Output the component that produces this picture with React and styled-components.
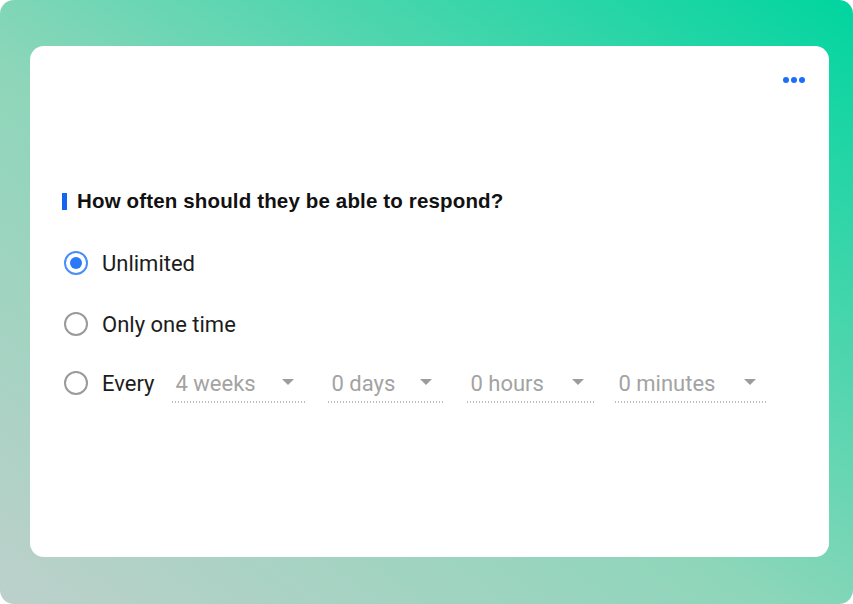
import styled, { createGlobalStyle } from "styled-components";

const Global = createGlobalStyle`
  html, body {
    margin: 0;
    padding: 0;
    background: #fff;
  }
  body {
    font-family: Roboto, "Liberation Sans", sans-serif;
  }
`;

const Frame = styled.div`
  width: 853px;
  height: 604px;
  box-sizing: border-box;
  border-radius: 14px;
  background: linear-gradient(35deg, #bdd0cb 0%, #8dd6ba 45%, #00d59f 100%);
  padding: 46px 24px 47px 30px;
  display: flex;
`;

const Card = styled.div`
  flex: 1;
  background: #fff;
  border-radius: 14px;
  padding: 0 0 0 32px;
  display: flex;
  flex-direction: column;
  position: relative;
`;

const More = styled.button`
  position: absolute;
  top: 31px;
  right: 24px;
  border: 0;
  background: none;
  padding: 0;
  display: flex;
  gap: 2px;
  cursor: pointer;
  span {
    width: 6px;
    height: 6px;
    border-radius: 50%;
    background: #1d6ef6;
  }
`;

const Title = styled.h2`
  margin: 143px 0 0 0;
  display: flex;
  align-items: center;
  gap: 10px;
  font-family: "Liberation Sans", Arial, sans-serif;
  font-size: 20.5px;
  letter-spacing: 0.15px;
  font-weight: 700;
  color: #111;
  &::before {
    content: "";
    width: 5px;
    height: 17px;
    background: #1565f5;
  }
`;

const Options = styled.div`
  margin-top: 38px;
  display: flex;
  flex-direction: column;
  gap: 37px;
`;

const Row = styled.label`
  display: flex;
  align-items: center;
  height: 24px;
  gap: 14px;
  font-size: 22px;
  color: #1c1c1c;
  cursor: pointer;
  &:last-child {
    margin-top: -2px;
  }
`;

const Radio = styled.span`
  width: 24px;
  height: 24px;
  margin-left: 2px;
  box-sizing: border-box;
  border-radius: 50%;
  border: 2px solid ${(p) => (p.checked ? "#4a8ef7" : "#9a9a9a")};
  display: flex;
  align-items: center;
  justify-content: center;
  flex-shrink: 0;
  &::after {
    content: "";
    width: 12px;
    height: 12px;
    border-radius: 50%;
    background: ${(p) => (p.checked ? "#2a7af5" : "transparent")};
  }
`;

const Selects = styled.div`
  display: flex;
  align-items: center;
  margin-left: 3px;
`;

const Select = styled.div`
  position: relative;
  width: ${(p) => p.w}px;
  margin-right: ${(p) => p.gap}px;
  box-sizing: border-box;
  display: flex;
  align-items: center;
  justify-content: space-between;
  padding: 0 11px 0 4px;
  height: 24px;
  color: #a3a3a3;
  font-size: 22px;
  &::after {
    content: "";
    position: absolute;
    left: 0;
    right: 0;
    bottom: -8px;
    height: 2px;
    background-image: radial-gradient(circle, #bdbdbd 0.8px, transparent 1px);
    background-size: 3px 2px;
    background-repeat: repeat-x;
  }
`;

const Caret = styled.span`
  width: 0;
  height: 0;
  border-left: 6px solid transparent;
  border-right: 6px solid transparent;
  border-top: 6px solid #9c9c9c;
  margin-top: -2px;
`;

const selects = [
  { label: "4 weeks", w: 134, gap: 22 },
  { label: "0 days", w: 116, gap: 23 },
  { label: "0 hours", w: 129, gap: 19 },
  { label: "0 minutes", w: 153, gap: 0 },
];

export default function App() {
  return (
    <>
      <Global />
      <Frame>
        <Card>
          <More aria-label="More">
            <span />
            <span />
            <span />
          </More>
          <Title>How often should they be able to respond?</Title>
          <Options>
            <Row>
              <Radio checked />
              Unlimited
            </Row>
            <Row>
              <Radio />
              Only one time
            </Row>
            <Row>
              <Radio />
              Every
              <Selects>
                {selects.map((s) => (
                  <Select key={s.label} w={s.w} gap={s.gap}>
                    {s.label}
                    <Caret />
                  </Select>
                ))}
              </Selects>
            </Row>
          </Options>
        </Card>
      </Frame>
    </>
  );
}
